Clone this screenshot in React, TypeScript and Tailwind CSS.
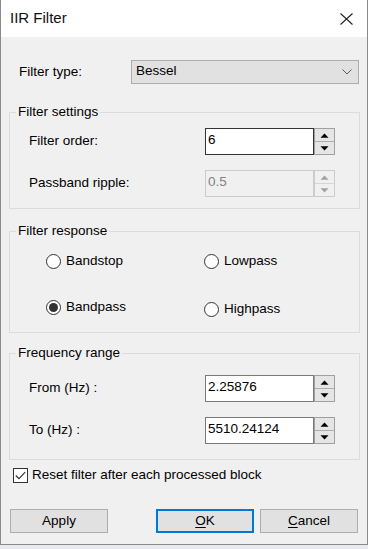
import React from "react";

function Arrow({ up, color }: { up: boolean; color: string }) {
  return (
    <svg width="9" height="5" viewBox="0 0 9 5">
      {up ? <polygon points="0.5,4.8 8.5,4.8 4.5,0.6" fill={color} /> : <polygon points="0.5,0.2 8.5,0.2 4.5,4.4" fill={color} />}
    </svg>
  );
}

function Spin({ value, disabled, focused }: { value: string; disabled?: boolean; focused?: boolean }) {
  const boxBorder = disabled ? "border-[#cccccc] bg-[#f0f0f0] text-[#838383]" : focused ? "border-[#333333] bg-white text-black" : "border-[#7a7a7a] bg-white text-black";
  const btn = disabled ? "border-[#d6d6d6] bg-[#f0f0f0]" : "border-[#adadad] bg-[#e5e5e5]";
  const ac = disabled ? "#a3a3a3" : "#000000";
  return (
    <div className="flex h-[27px]">
      <div className={`w-[109px] h-full border flex items-center pl-[2px] pb-[2px] text-[13.5px] ${boxBorder}`}>{value}</div>
      <div className={`w-[21px] h-full flex flex-col border ${disabled ? "border-[#cccccc]" : "border-[#a0a0a0]"}`}>
        <div className={`flex-1 flex items-center justify-center border-b ${btn}`}>
          <Arrow up color={ac} />
        </div>
        <div className={`flex-1 flex items-center justify-center ${btn}`}>
          <Arrow up={false} color={ac} />
        </div>
      </div>
    </div>
  );
}

function Radio({ label, checked, extra }: { label: string; checked?: boolean; extra?: string }) {
  return (
    <div className={`flex items-center h-[16px] ${extra ?? ""}`}>
      <div className="w-[15px] h-[15px] rounded-full border border-[#333333] bg-white flex items-center justify-center">
        {checked && <div className="w-[9px] h-[9px] rounded-full bg-[#333333]" />}
      </div>
      <span className="ml-[5px] text-[13.5px]">{label}</span>
    </div>
  );
}

function Group({ title, className, children }: { title: string; className?: string; children: React.ReactNode }) {
  return (
    <fieldset className={`ml-[8px] w-[351px] border border-[#dcdcdc] ${className ?? ""}`}>
      <legend className="ml-[6px] px-[2px] text-[13.5px] leading-[16px]">{title}</legend>
      {children}
    </fieldset>
  );
}

export default function App() {
  return (
    <div className="w-[368px] h-[549px] bg-[#e9e9f2] font-['Liberation_Sans',Arial,sans-serif] text-black">
      <div className="h-[545px] border-x border-b border-[#8a8a8a] flex flex-col bg-[#f0f0f0]">
        <div className="h-[37px] bg-white flex items-center pl-[9px] pr-[14px] shrink-0">
          <span className="text-[15px] text-[#111]">IIR Filter</span>
          <svg className="ml-auto" width="13" height="12" viewBox="0 0 13 12">
            <path d="M0.5 0.5 L12.5 11.5 M12.5 0.5 L0.5 11.5" stroke="#222" strokeWidth="1.1" fill="none" />
          </svg>
        </div>

        <div className="flex items-center mt-[23px] h-[24px] pl-[18px]">
          <span className="w-[112px] text-[13.5px]">Filter type:</span>
          <div className="w-[228px] h-[24px] border border-[#adadad] bg-[#e1e1e1] flex items-center pl-[4px] pr-[6px] text-[13.5px]">
            <span className="pb-[1px]">Bessel</span>
            <svg className="ml-auto" width="10" height="6" viewBox="0 0 10 6">
              <path d="M0.5 0.5 L5 5 L9.5 0.5" stroke="#5a5a5a" strokeWidth="1" fill="none" />
            </svg>
          </div>
        </div>

        <Group title="Filter settings" className="mt-[20px] pt-[8px] pb-[11px]">
          <div className="flex items-center pl-[19px]">
            <span className="w-[176px] text-[13.5px]">Filter order:</span>
            <Spin value="6" focused />
          </div>
          <div className="flex items-center pl-[19px] mt-[15px]">
            <span className="w-[176px] text-[13.5px]">Passband ripple:</span>
            <Spin value="0.5" disabled />
          </div>
        </Group>

        <Group title="Filter response" className="mt-[14px] pt-[14px] pb-[15px]">
          <div className="flex pl-[36px]">
            <div className="w-[158px] flex flex-col gap-[30px]">
              <Radio label="Bandstop" />
              <Radio label="Bandpass" checked />
            </div>
            <div className="flex flex-col gap-[30px]">
              <Radio label="Lowpass" />
              <Radio label="Highpass" extra="mt-[2px]" />
            </div>
          </div>
        </Group>

        <Group title="Frequency range" className="mt-[12px] pt-[14px] pb-[15px]">
          <div className="flex items-center pl-[19px]">
            <span className="w-[176px] text-[13.5px]">From (Hz) :</span>
            <Spin value="2.25876" />
          </div>
          <div className="flex items-center pl-[19px] mt-[15px]">
            <span className="w-[176px] text-[13.5px]">To (Hz) :</span>
            <Spin value="5510.24124" />
          </div>
        </Group>

        <div className="flex items-center mt-[7px] pl-[12px] h-[16px]">
          <div className="w-[15px] h-[15px] border border-[#333333] bg-white flex items-center justify-center">
            <svg width="11" height="9" viewBox="0 0 11 9">
              <path d="M0.8 4.5 L4 7.7 L10.2 1.2" stroke="#333" strokeWidth="1.2" fill="none" />
            </svg>
          </div>
          <span className="ml-[4px] text-[13.5px]">Reset filter after each processed block</span>
        </div>

        <div className="flex mt-[26px] pl-[9px] h-[24px]">
          <button className="w-[98px] h-[24px] bg-[#e1e1e1] border border-[#adadad] text-[13.5px]">Apply</button>
          <button className="ml-[48px] w-[98px] h-[24px] bg-[#e1e1e1] border-2 border-[#0078d7] text-[13.5px]">
            <span className="underline underline-offset-2">O</span>K
          </button>
          <button className="ml-[6px] w-[98px] h-[24px] bg-[#e1e1e1] border border-[#adadad] text-[13.5px]">
            <span className="underline underline-offset-2">C</span>ancel
          </button>
        </div>
      </div>
    </div>
  );
}
